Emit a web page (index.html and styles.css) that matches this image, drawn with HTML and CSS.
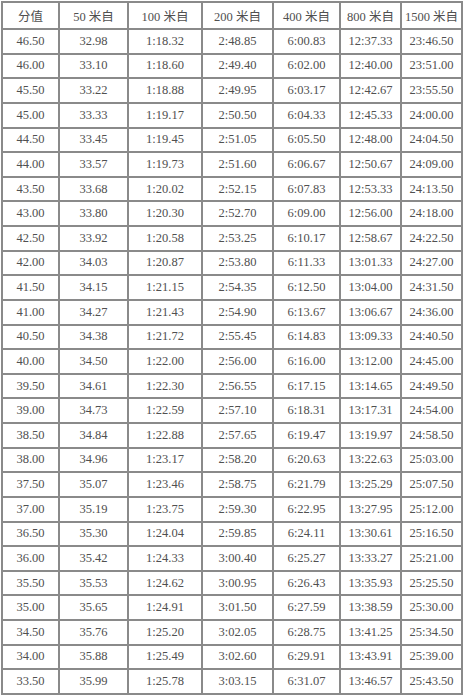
FILE: index.html
```html
<!DOCTYPE html>
<html lang="zh">
<head>
<meta charset="utf-8">
<title>游泳成绩分值表</title>
<link rel="stylesheet" href="styles.css">
</head>
<body>
<table class="score-table">
  <colgroup>
    <col class="c1"><col class="c2"><col class="c3"><col class="c4"><col class="c5"><col class="c6"><col class="c7">
  </colgroup>
  <thead>
    <tr class="head-row">
      <th>分值</th><th>50 米自</th><th>100 米自</th><th>200 米自</th><th>400 米自</th><th>800 米自</th><th>1500 米自</th>
    </tr>
  </thead>
  <tbody>
    <tr><td>46.50</td><td>32.98</td><td>1:18.32</td><td>2:48.85</td><td>6:00.83</td><td>12:37.33</td><td>23:46.50</td></tr>
    <tr><td>46.00</td><td>33.10</td><td>1:18.60</td><td>2:49.40</td><td>6:02.00</td><td>12:40.00</td><td>23:51.00</td></tr>
    <tr><td>45.50</td><td>33.22</td><td>1:18.88</td><td>2:49.95</td><td>6:03.17</td><td>12:42.67</td><td>23:55.50</td></tr>
    <tr><td>45.00</td><td>33.33</td><td>1:19.17</td><td>2:50.50</td><td>6:04.33</td><td>12:45.33</td><td>24:00.00</td></tr>
    <tr><td>44.50</td><td>33.45</td><td>1:19.45</td><td>2:51.05</td><td>6:05.50</td><td>12:48.00</td><td>24:04.50</td></tr>
    <tr><td>44.00</td><td>33.57</td><td>1:19.73</td><td>2:51.60</td><td>6:06.67</td><td>12:50.67</td><td>24:09.00</td></tr>
    <tr><td>43.50</td><td>33.68</td><td>1:20.02</td><td>2:52.15</td><td>6:07.83</td><td>12:53.33</td><td>24:13.50</td></tr>
    <tr><td>43.00</td><td>33.80</td><td>1:20.30</td><td>2:52.70</td><td>6:09.00</td><td>12:56.00</td><td>24:18.00</td></tr>
    <tr><td>42.50</td><td>33.92</td><td>1:20.58</td><td>2:53.25</td><td>6:10.17</td><td>12:58.67</td><td>24:22.50</td></tr>
    <tr><td>42.00</td><td>34.03</td><td>1:20.87</td><td>2:53.80</td><td>6:11.33</td><td>13:01.33</td><td>24:27.00</td></tr>
    <tr><td>41.50</td><td>34.15</td><td>1:21.15</td><td>2:54.35</td><td>6:12.50</td><td>13:04.00</td><td>24:31.50</td></tr>
    <tr><td>41.00</td><td>34.27</td><td>1:21.43</td><td>2:54.90</td><td>6:13.67</td><td>13:06.67</td><td>24:36.00</td></tr>
    <tr><td>40.50</td><td>34.38</td><td>1:21.72</td><td>2:55.45</td><td>6:14.83</td><td>13:09.33</td><td>24:40.50</td></tr>
    <tr><td>40.00</td><td>34.50</td><td>1:22.00</td><td>2:56.00</td><td>6:16.00</td><td>13:12.00</td><td>24:45.00</td></tr>
    <tr><td>39.50</td><td>34.61</td><td>1:22.30</td><td>2:56.55</td><td>6:17.15</td><td>13:14.65</td><td>24:49.50</td></tr>
    <tr><td>39.00</td><td>34.73</td><td>1:22.59</td><td>2:57.10</td><td>6:18.31</td><td>13:17.31</td><td>24:54.00</td></tr>
    <tr><td>38.50</td><td>34.84</td><td>1:22.88</td><td>2:57.65</td><td>6:19.47</td><td>13:19.97</td><td>24:58.50</td></tr>
    <tr><td>38.00</td><td>34.96</td><td>1:23.17</td><td>2:58.20</td><td>6:20.63</td><td>13:22.63</td><td>25:03.00</td></tr>
    <tr><td>37.50</td><td>35.07</td><td>1:23.46</td><td>2:58.75</td><td>6:21.79</td><td>13:25.29</td><td>25:07.50</td></tr>
    <tr><td>37.00</td><td>35.19</td><td>1:23.75</td><td>2:59.30</td><td>6:22.95</td><td>13:27.95</td><td>25:12.00</td></tr>
    <tr><td>36.50</td><td>35.30</td><td>1:24.04</td><td>2:59.85</td><td>6:24.11</td><td>13:30.61</td><td>25:16.50</td></tr>
    <tr><td>36.00</td><td>35.42</td><td>1:24.33</td><td>3:00.40</td><td>6:25.27</td><td>13:33.27</td><td>25:21.00</td></tr>
    <tr><td>35.50</td><td>35.53</td><td>1:24.62</td><td>3:00.95</td><td>6:26.43</td><td>13:35.93</td><td>25:25.50</td></tr>
    <tr><td>35.00</td><td>35.65</td><td>1:24.91</td><td>3:01.50</td><td>6:27.59</td><td>13:38.59</td><td>25:30.00</td></tr>
    <tr><td>34.50</td><td>35.76</td><td>1:25.20</td><td>3:02.05</td><td>6:28.75</td><td>13:41.25</td><td>25:34.50</td></tr>
    <tr><td>34.00</td><td>35.88</td><td>1:25.49</td><td>3:02.60</td><td>6:29.91</td><td>13:43.91</td><td>25:39.00</td></tr>
    <tr><td>33.50</td><td>35.99</td><td>1:25.78</td><td>3:03.15</td><td>6:31.07</td><td>13:46.57</td><td>25:43.50</td></tr>
  </tbody>
</table>
</body>
</html>
```

FILE: styles.css
```css
html, body {
  margin: 0;
  padding: 0;
  background: #ffffff;
}

body {
  padding: 1px 0 0 1px;
}

.score-table {
  border-collapse: collapse;
  table-layout: fixed;
  width: 462px;
  font-family: "Liberation Serif", "Noto Sans CJK SC", serif;
  font-size: 12.5px;
  color: #505050;
}

.c1 { width: 57px; }
.c2 { width: 69px; }
.c3 { width: 74px; }
.c4 { width: 71px; }
.c5 { width: 67px; }
.c6 { width: 61px; }
.c7 { width: 61px; }

.score-table th,
.score-table td {
  border: 2px solid #8a8a8a;
  padding: 0;
  text-align: center;
  vertical-align: middle;
  white-space: nowrap;
}

.score-table th {
  font-weight: normal;
  font-family: "Liberation Serif", "Noto Sans CJK SC", serif;
  font-size: 12.5px;
  color: #505050;
}

.head-row {
  height: 27px;
}

.score-table tbody tr {
  height: 24.63px;
}
```
